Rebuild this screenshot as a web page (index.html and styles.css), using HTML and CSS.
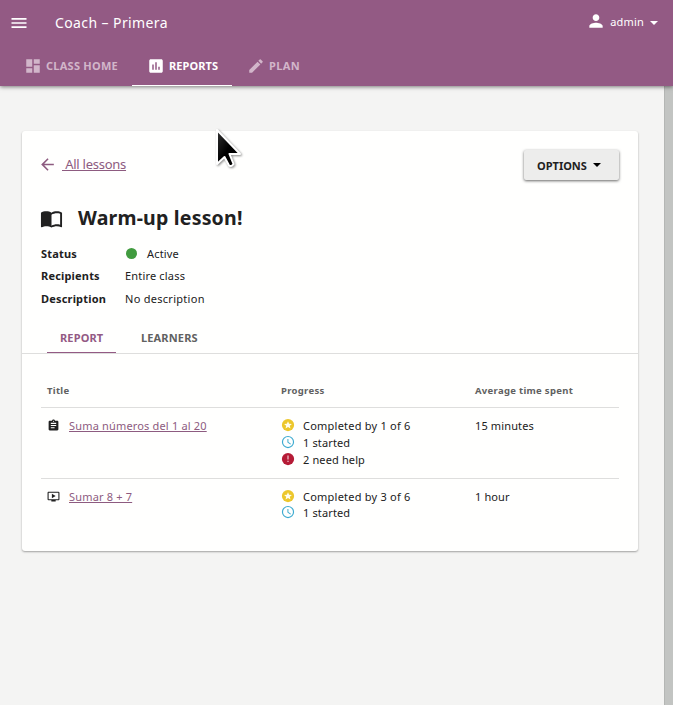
FILE: index.html
```html
<!DOCTYPE html>
<html lang="en">
<head>
<meta charset="utf-8">
<title>Coach – Primera</title>
<link rel="stylesheet" href="styles.css">
</head>
<body>
<svg class="defs" width="0" height="0">
  <symbol id="star" viewBox="0 0 24 24"><circle cx="12" cy="12" r="10.5" fill="#ecc72c"/><path fill="#fffef0" d="M12 5.500l1.900 4.400 4.800.4-3.600 3.100 1.100 4.700-4.200-2.500-4.200 2.500 1.100-4.700-3.600-3.100 4.800-.4z"/></symbol>
  <symbol id="clock" viewBox="0 0 24 24"><path fill="#3eabd0" d="M12 1.500a10.500 10.500 0 1 0 0 21 10.500 10.500 0 0 0 0-21zm0 19a8.500 8.500 0 1 1 0-17 8.500 8.500 0 0 1 0 17zM12.700 7H11v6l5.200 3.200.8-1.400-4.300-2.600z"/></symbol>
  <symbol id="help" viewBox="0 0 24 24"><circle cx="12" cy="12" r="10.500" fill="#b51b36"/><path fill="#f3ccd3" d="M11 6h2v7h-2zm0 9h2v2h-2z"/></symbol>
</svg>
<header class="appbar">
  <div class="topline">
    <svg class="menu" viewBox="0 0 24 24"><path d="M3 18h18v-2H3zm0-5h18v-2H3zm0-7v2h18V6z"/></svg>
    <span class="brand">Coach – Primera</span>
    <div class="user">
      <svg class="person" viewBox="0 0 24 24"><path d="M12 12c2.210 0 4-1.790 4-4s-1.790-4-4-4-4 1.790-4 4 1.790 4 4 4zm0 2c-2.670 0-8 1.340-8 4v2h16v-2c0-2.660-5.330-4-8-4z"/></svg>
      <span class="admin">admin</span>
      <svg class="caret" viewBox="0 0 8 4"><path d="M0 0h8L4 4z"/></svg>
    </div>
  </div>
  <nav class="nav">
    <a class="navtab home"><svg viewBox="0 0 24 24"><path d="M3 13h8V3H3zm0 8h8v-6H3zm10 0h8V11h-8zm0-18v6h8V3z"/></svg><span>CLASS HOME</span></a>
    <a class="navtab reports"><svg viewBox="0 0 24 24"><path d="M19 3H5c-1.100 0-2 .9-2 2v14c0 1.100.9 2 2 2h14c1.100 0 2-.9 2-2V5c0-1.100-.9-2-2-2zM9 17H7v-7h2zm4 0h-2V7h2zm4 0h-2v-4h2z"/></svg><span>REPORTS</span></a>
    <a class="navtab plan"><svg viewBox="0 0 24 24"><path d="M3 17.250V21h3.750L17.810 9.940l-3.750-3.750zM20.710 7.040a1 1 0 0 0 0-1.410l-2.340-2.340a1 1 0 0 0-1.410 0l-1.830 1.830 3.750 3.750z"/></svg><span>PLAN</span></a>
  </nav>
</header>
<div class="scrollbar"></div>
<main class="card">
  <div class="actions">
    <a class="back"><svg viewBox="0 0 24 24"><path d="M20 11H7.830l5.590-5.590L12 4l-8 8 8 8 1.410-1.410L7.830 13H20z"/></svg><span class="backtext">&nbsp;All lessons</span></a>
    <button class="options"><span>OPTIONS</span><svg viewBox="0 0 8 4"><path d="M0 0h8L4 4z"/></svg></button>
  </div>
  <h1 class="heading">
    <svg viewBox="0 0 24 24"><path d="M21 5c-1.110-.35-2.330-.5-3.500-.5-1.950 0-4.050.4-5.500 1.500-1.450-1.100-3.550-1.500-5.500-1.500S2.450 4.900 1 6v14.650c0 .25.250.5.500.5.100 0 .150-.050.250-.050C3.100 20.450 5.050 20 6.500 20c1.950 0 4.050.4 5.500 1.500 1.350-.85 3.800-1.500 5.500-1.500 1.650 0 3.350.3 4.750 1.050.1.050.150.050.250.050.250 0 .5-.250.5-.5V6c-.6-.450-1.250-.750-2-1zm0 13.500c-1.100-.350-2.300-.5-3.500-.5-1.700 0-4.150.650-5.500 1.500V8c1.350-.850 3.800-1.500 5.500-1.500 1.200 0 2.400.150 3.500.5z"/></svg>
    <span>Warm-up lesson!</span>
  </h1>
  <dl class="details">
    <dt>Status</dt><dd><i class="dot"></i><span>Active</span></dd>
    <dt>Recipients</dt><dd><span>Entire class</span></dd>
    <dt>Description</dt><dd><span class="description">No description</span></dd>
  </dl>
  <div class="tabs"><a class="tab active"><span>REPORT</span></a><a class="tab"><span>LEARNERS</span></a></div>
  <section class="table">
    <div class="row head"><span>Title</span><span>Progress</span><span>Average time spent</span></div>
    <div class="row first">
      <div class="lesson"><svg viewBox="0 0 24 24"><path d="M19 3h-4.180C14.400 1.840 13.300 1 12 1s-2.400.84-2.820 2H5c-1.100 0-2 .9-2 2v14c0 1.100.9 2 2 2h14c1.100 0 2-.9 2-2V5c0-1.100-.9-2-2-2zm-7 0a1 1 0 1 1 0 2 1 1 0 0 1 0-2zm2 14H7v-2h7zm3-4H7v-2h10zm0-4H7V7h10z"/></svg><a class="link">Suma números del 1 al 20</a></div>
      <div class="progress">
        <div class="stat"><svg><use href="#star"/></svg><span class="done">Completed by 1 of 6</span></div>
        <div class="stat"><svg><use href="#clock"/></svg><span>1 started</span></div>
        <div class="stat"><svg><use href="#help"/></svg><span>2 need help</span></div>
      </div>
      <div class="time"><span>15 minutes</span></div>
    </div>
    <div class="row second">
      <div class="lesson"><svg viewBox="0 0 24 24"><path d="M21 3H3c-1.110 0-2 .89-2 2v12a2 2 0 0 0 2 2h5v2h8v-2h5c1.100 0 2-.9 2-2V5a2 2 0 0 0-2-2zm0 14H3V5h18zM16 11l-7 4V7z"/></svg><a class="link">Sumar 8 + 7</a></div>
      <div class="progress">
        <div class="stat"><svg><use href="#star"/></svg><span class="done">Completed by 3 of 6</span></div>
        <div class="stat"><svg><use href="#clock"/></svg><span>1 started</span></div>
      </div>
      <div class="time"><span>1 hour</span></div>
    </div>
  </section>
</main>
<svg class="cursor" viewBox="0 0 30 44"><defs><linearGradient id="ink" x1="0" y1="0" x2="1" y2="1"><stop offset="0" stop-color="#333"/><stop offset=".5" stop-color="#000"/></linearGradient></defs><path fill="url(#ink)" stroke="#fff" stroke-width="2" stroke-linejoin="round" d="M3 2v34l7.500-7 4.500 8.500q2.500 1.500 4.500-1.500L15.500 26H26z"/></svg>
</body>
</html>
```

FILE: styles.css
```css
* { box-sizing: border-box; }
body {
  margin: 0;
  height: 705px;
  overflow: hidden;
  background: #f4f4f3;
  color: #212121;
  font: 11px/17px "Noto Sans", sans-serif;
}
svg { display: block; flex: none; fill: currentColor; }
span, .link { white-space: nowrap; }
.defs { position: absolute; }

.appbar {
  position: relative;
  z-index: 2;
  height: 86px;
  background: #935a84;
  color: #fff;
  box-shadow: 0 1px 4px rgba(0, 0, 0, .5);
}
.topline { display: flex; align-items: center; height: 46px; padding: 0 15px 0 9px; }
.menu { width: 20px; height: 20px; }
.brand { margin-left: 26px; padding-bottom: 2px; font-size: 14px; letter-spacing: .4px; }
.user { display: flex; align-items: center; margin-left: auto; padding-bottom: 4px; }
.person { width: 20px; height: 20px; margin-right: 4px; }
.admin { letter-spacing: .2px; padding-top: 1px; }
.caret { width: 8px; height: 4px; margin: 4px 0 0 6px; }
.nav { display: flex; height: 40px; padding-left: 12px; }
.navtab {
  display: flex;
  align-items: center;
  height: 40px;
  padding-left: 12px;
  color: #d2b6ca;
  font-weight: bold;
}
.navtab span { padding-bottom: 2px; }
.navtab svg { width: 18px; height: 18px; margin-right: 4px; }
.home { width: 120px; letter-spacing: .25px; }
.reports { width: 100px; padding-left: 15px; color: #fff; border-bottom: 1px solid #fff; letter-spacing: .1px; }
.reports span { padding-bottom: 0; }
.plan { padding-left: 15px; letter-spacing: .4px; }

.scrollbar {
  position: absolute;
  top: 86px;
  right: 0;
  width: 9px;
  height: 619px;
  background: #c2c4c2;
  border-left: 1px solid #b4b6b4;
}

.card {
  width: 616px;
  height: 420px;
  margin: 45px 0 0 22px;
  background: #fffffe;
  border-radius: 3px;
  box-shadow: 0 1px 2px rgba(0, 0, 0, .35);
}
.actions { display: flex; justify-content: space-between; padding: 19px 19px 0 16px; height: 68px; }
.back { display: flex; align-items: center; height: 29px; color: #8d5b80; font-size: 13px; letter-spacing: -.25px; }
.back svg { width: 19px; height: 19px; margin-right: 5px; }
.backtext { padding-bottom: 1px; }
.backtext, .link { text-decoration: underline; }
.options {
  display: flex;
  align-items: center;
  width: 95px;
  height: 30px;
  padding: 0 0 0 13px;
  border: 0;
  border-radius: 2px;
  background: #ededec;
  box-shadow: 0 1px 3px rgba(0, 0, 0, .6);
  color: #212121;
  font: bold 11px "Noto Sans", sans-serif;
}
.options svg { width: 8px; height: 4px; margin-left: 6px; fill: #000; }
.heading {
  display: flex;
  align-items: center;
  height: 38px;
  margin: 0;
  padding-left: 18px;
  font-size: 19.5px;
  line-height: 38px;
  letter-spacing: .2px;
}
.heading svg { width: 23px; height: 23px; margin-right: 15px; }
.details {
  display: grid;
  grid-template-columns: 84px 1fr;
  grid-auto-rows: 22.5px;
  align-items: center;
  margin: 5px 0 0;
  padding-left: 19px;
  letter-spacing: .18px;
}
.details dt { font-weight: bold; }
.details dd { display: flex; align-items: center; margin: 0; }
.description { letter-spacing: .28px; }
.dot { width: 11px; height: 11px; margin: 1px 10px 0 1px; border-radius: 50%; background: #419b3f; }
.tabs { display: flex; height: 44px; padding-left: 25px; border-bottom: 1px solid #dededd; }
.tab { height: 43px; padding: 19px 13px 0; color: #616161; font-weight: bold; letter-spacing: .15px; }
.tab.active { width: 69px; margin-right: 12px; color: #935a84; border-bottom: 1px solid #935a84; }

.table { padding: 19px 19px 0; }
.row { display: grid; grid-template-columns: 240px 194px 1fr; border-bottom: 1px solid #dededd; letter-spacing: .13px; }
.head { height: 35px; padding: 9px 0 0 6px; grid-template-columns: 234px 194px 1fr; color: #616161; font-size: 9.5px; font-weight: bold; letter-spacing: .3px; }
.first { height: 71px; padding-top: 9px; }
.second { height: 71px; padding-top: 9px; border: 0; }
.lesson { display: flex; padding-left: 6px; }
.lesson svg { width: 13px; height: 13px; margin: 2px 9px 0 0; }
.link { color: #8d5b80; letter-spacing: .17px; }
.stat { display: flex; height: 17px; }
.second .stat { height: 16px; }
.stat svg { width: 14px; height: 14px; margin: 1px 8px 0 0; }
.done { letter-spacing: .23px; }

.cursor { position: absolute; z-index: 3; left: 214px; top: 128px; width: 30px; height: 44px; filter: drop-shadow(1px 1px 1px rgba(0, 0, 0, .45)); }
```
